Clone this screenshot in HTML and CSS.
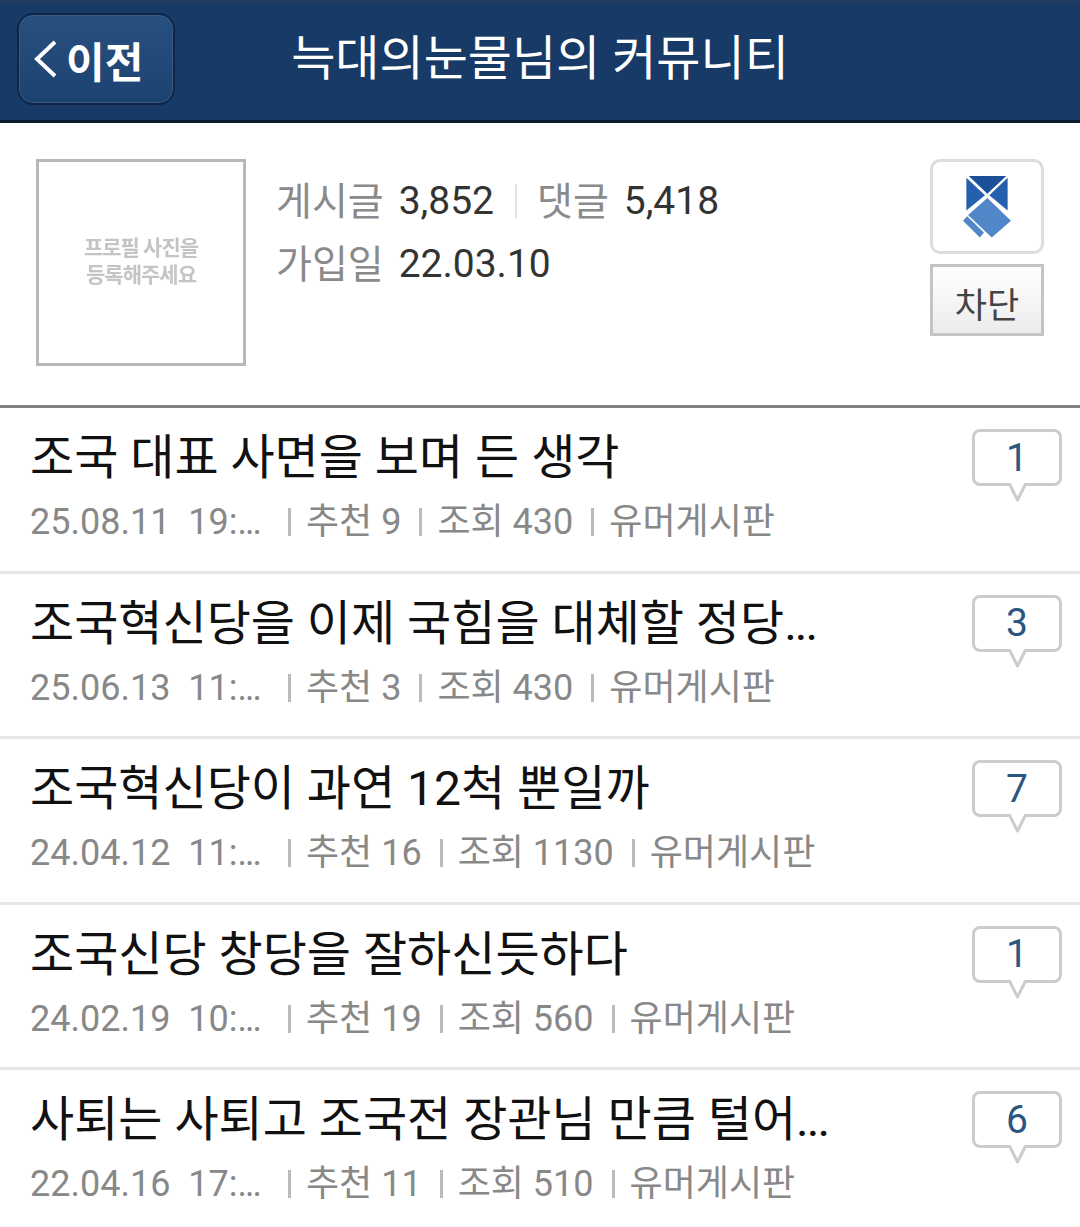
FILE: index.html
```html
<!DOCTYPE html>
<html lang="ko">
<head>
	<meta charset="UTF-8">
	<title>커뮤니티</title>
	<link rel="stylesheet" href="styles.css">
</head>
<body>
	<div class="top">
		<a class="back"><svg class="chev" width="24" height="40" viewBox="0 0 24 40"><path d="M22 3 L4 20 L22 37" fill="none" stroke="#fff" stroke-width="4"/></svg><span>이전</span></a>
		<h1>늑대의눈물님의 커뮤니티</h1>
	</div>
	<div class="profile">
		<div class="photo"><span>프로필 사진을<br>등록해주세요</span></div>
		<div class="stats">
			<div class="line"><b>게시글</b><i>3,852</i><u></u><b>댓글</b><i>5,418</i></div>
			<div class="line"><b>가입일</b><i>22.03.10</i></div>
		</div>
		<div class="side">
			<div class="badge">
				<svg width="48" height="62" viewBox="40 33 142 183">
					<path d="M57 33 H168 L112 85 Z" fill="#1c5199"/>
					<path d="M50 38 L105 90 L50 135 Z" fill="#2460ab"/>
					<path d="M172 38 L118 90 L172 135 Z" fill="#2460ab"/>
					<path d="M112 98 L182 165 L125 215 L55 148 Z" fill="#5187c8"/>
					<path d="M52 152 L102 200 L90 215 L40 165 Z" fill="#5187c8"/>
				</svg>
			</div>
			<div class="block">차단</div>
		</div>
	</div>
	<div class="list">
		<div class="row">
			<div class="body">
				<div class="subject">조국 대표 사면을 보며 든 생각</div>
				<div class="meta"><span class="date">25.08.11&nbsp; 19:<em>...</em></span><span class="sep"></span><span>추천 9</span><span class="sep"></span><span>조회 430</span><span class="sep"></span><span>유머게시판</span></div>
			</div>
			<div class="count">1<svg class="tip" width="25" height="20" viewBox="0 0 25 20"><path d="M4 0 L12.500 17 L21 0" fill="#fff" stroke="#ccc" stroke-width="3" stroke-linejoin="round"/></svg></div>
		</div>
		<div class="row">
			<div class="body">
				<div class="subject">조국혁신당을 이제 국힘을 대체할 정당<em>...</em></div>
				<div class="meta"><span class="date">25.06.13&nbsp; 11:<em>...</em></span><span class="sep"></span><span>추천 3</span><span class="sep"></span><span>조회 430</span><span class="sep"></span><span>유머게시판</span></div>
			</div>
			<div class="count">3<svg class="tip" width="25" height="20" viewBox="0 0 25 20"><path d="M4 0 L12.500 17 L21 0" fill="#fff" stroke="#ccc" stroke-width="3" stroke-linejoin="round"/></svg></div>
		</div>
		<div class="row">
			<div class="body">
				<div class="subject">조국혁신당이 과연 12척 뿐일까</div>
				<div class="meta"><span class="date">24.04.12&nbsp; 11:<em>...</em></span><span class="sep"></span><span>추천 16</span><span class="sep"></span><span>조회 1130</span><span class="sep"></span><span>유머게시판</span></div>
			</div>
			<div class="count">7<svg class="tip" width="25" height="20" viewBox="0 0 25 20"><path d="M4 0 L12.500 17 L21 0" fill="#fff" stroke="#ccc" stroke-width="3" stroke-linejoin="round"/></svg></div>
		</div>
		<div class="row">
			<div class="body">
				<div class="subject">조국신당 창당을 잘하신듯하다</div>
				<div class="meta"><span class="date">24.02.19&nbsp; 10:<em>...</em></span><span class="sep"></span><span>추천 19</span><span class="sep"></span><span>조회 560</span><span class="sep"></span><span>유머게시판</span></div>
			</div>
			<div class="count">1<svg class="tip" width="25" height="20" viewBox="0 0 25 20"><path d="M4 0 L12.500 17 L21 0" fill="#fff" stroke="#ccc" stroke-width="3" stroke-linejoin="round"/></svg></div>
		</div>
		<div class="row">
			<div class="body">
				<div class="subject">사퇴는 사퇴고 조국전 장관님 만큼 털어<em>...</em></div>
				<div class="meta"><span class="date">22.04.16&nbsp; 17:<em>...</em></span><span class="sep"></span><span>추천 11</span><span class="sep"></span><span>조회 510</span><span class="sep"></span><span>유머게시판</span></div>
			</div>
			<div class="count">6<svg class="tip" width="25" height="20" viewBox="0 0 25 20"><path d="M4 0 L12.500 17 L21 0" fill="#fff" stroke="#ccc" stroke-width="3" stroke-linejoin="round"/></svg></div>
		</div>
	</div>
</body>
</html>
```
FILE: styles.css
```css
html, body {
	margin: 0;
	padding: 0;
}
body {
	width: 1080px;
	height: 1227px;
	overflow: hidden;
	background: #fff;
	font-family: Roboto, "Noto Sans CJK KR", sans-serif;
}
em {
	font-style: normal;
	letter-spacing: -2px;
}
.top {
	height: 120px;
	background: #183a66;
	box-shadow: inset 0 4px 0 #1e3c62;
	border-bottom: 3px solid #0b1a2c;
	display: flex;
	align-items: center;
	padding-left: 17px;
	position: relative;
}
.back {
	width: 140px;
	height: 88px;
	margin-bottom: 2px;
	border: 2px solid #0f2645;
	border-radius: 16px;
	background: linear-gradient(#28507f, #1c4270);
	box-shadow: inset 0 0 0 1px #35598a;
	display: flex;
	align-items: center;
	gap: 9px;
	padding-left: 14px;
	color: #fff;
	font-size: 42px;
	font-weight: 700;
}
.top h1 {
	margin: 0;
	font-size: 48px;
	font-weight: 400;
	color: #fff;
	position: absolute;
	left: 0;
	right: 0;
	top: 29px;
	text-align: center;
	line-height: 60px;
}
.profile {
	height: 282px;
	border-bottom: 3px solid #808080;
	display: flex;
	padding: 0 36px;
}
.photo {
	width: 204px;
	height: 201px;
	margin-top: 36px;
	border: 3px solid #b8b8b8;
	display: flex;
	align-items: center;
	justify-content: center;
	text-align: center;
	color: #c4c4c4;
	font-size: 21px;
	line-height: 27px;
	font-weight: 700;
	letter-spacing: -1px;
	flex: none;
}
.photo span {
	margin-bottom: 2px;
	filter: blur(0.5px);
}
.stats {
	flex: 1;
	padding: 46px 0 0 30px;
}
.line {
	height: 63px;
	display: flex;
	align-items: center;
	font-size: 39px;
}
.line b {
	font-weight: 400;
	color: #8a8a8a;
	margin: 0 15px 6px 0;
}
.line i {
	font-style: normal;
	color: #333;
}
.line u {
	width: 2px;
	height: 34px;
	background: #e2e2e2;
	margin: 0 20px 0 21px;
}
.side {
	width: 114px;
	flex: none;
	padding-top: 36px;
}
.badge {
	width: 108px;
	height: 89px;
	border: 3px solid #ddd;
	border-radius: 10px;
	display: flex;
	align-items: center;
	justify-content: center;
}
.block {
	width: 108px;
	height: 61px;
	margin-top: 10px;
	padding-top: 5px;
	border: 3px solid #c4c4c4;
	background: linear-gradient(#fff, #ececec);
	display: flex;
	align-items: center;
	justify-content: center;
	font-size: 35px;
	color: #444;
}
.row {
	height: 162.500px;
	border-bottom: 3px solid #e6e6e6;
	display: flex;
	justify-content: space-between;
	padding: 0 18px 0 30px;
}
.subject {
	font-size: 48px;
	line-height: 60px;
	color: #111;
	margin-top: 20px;
}
.meta {
	display: flex;
	align-items: center;
	font-size: 36px;
	color: #888;
	margin-top: 12px;
	line-height: 44px;
}
.date {
	width: 240px;
}
.sep {
	width: 3px;
	height: 28px;
	background: #bbb;
	margin: 0 15px 0 18px;
}
.count {
	width: 84px;
	height: 51px;
	margin-top: 21px;
	border: 3px solid #ccc;
	border-radius: 8px;
	display: flex;
	align-items: center;
	justify-content: center;
	font-size: 39px;
	color: #2b567f;
	position: relative;
	background: #fff;
}
.tip {
	position: absolute;
	left: 30px;
	bottom: -20px;
}
```
